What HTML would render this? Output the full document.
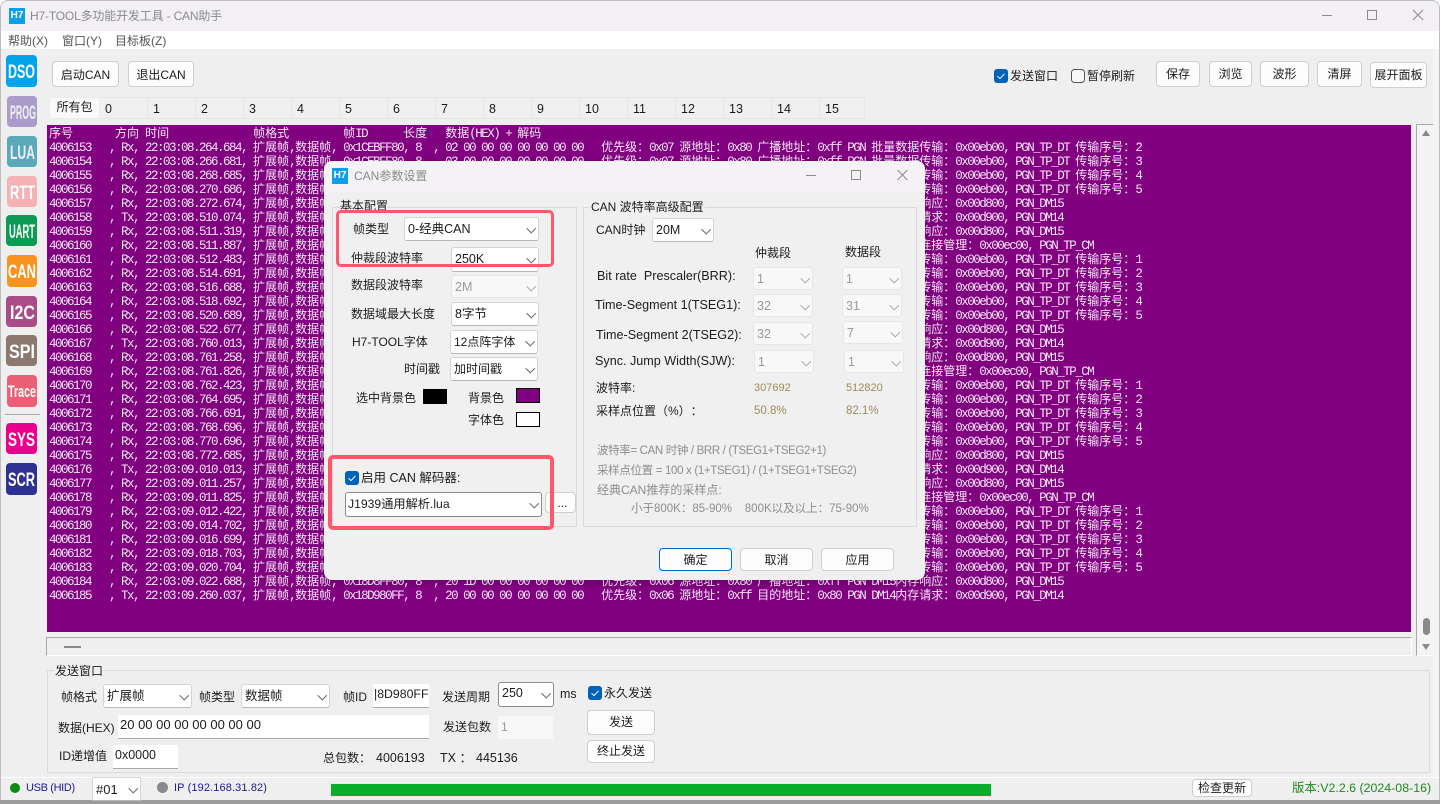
<!DOCTYPE html>
<html><head><meta charset="utf-8"><title>H7-TOOL CAN</title>
<style>
html,body{margin:0;padding:0;width:1442px;height:804px;overflow:hidden;background:#fff}
body{position:relative;font:12px/16px "Liberation Sans","Noto Sans CJK SC",sans-serif;color:#1c1c1c}
div,span,svg{position:absolute;box-sizing:border-box}
.t{white-space:pre;height:16px}
.g{color:#8e8e8e}
.o{color:#9b8c5c}
.n{color:#1d1d8c}
.btn{background:#fdfdfd;border:1px solid #cfcfcf;border-radius:4px;text-align:center;white-space:pre;color:#1c1c1c}
.c{background:#fff;border:1px solid #d4d4d4;border-bottom-color:#b8b8b8;border-radius:3px;padding-left:3px;white-space:pre;line-height:22px;font-size:12.5px}
.c:after{content:"";position:absolute;right:4px;top:7px;width:5.5px;height:5.5px;border-right:1px solid #666;border-bottom:1px solid #666;transform:rotate(45deg)}
.d{background:#f8f8f8;color:#9a9a9a;border-color:#e6e6e6}
.d:after{border-color:#aaa}
.f{border-color:#8c8c8c}
.in{background:#fff;border-bottom:1px solid #a8a8a8;white-space:pre;padding-left:2px;line-height:20px}
.grp{border:1px solid #dadada}
.tab{top:97px;width:48px;height:22px;background:#f0f0f0;border:1px solid #e6e6e6;border-left:0;padding-left:5px;line-height:22px;font-size:12.5px}
.red{border:3.5px solid #ff586c;border-radius:5px}
#log{left:47px;top:125px;width:1364px;height:507px;background:#800080;overflow:hidden;padding:1px 0 0 2px;color:#f6e6f6;font:12.5px/14px "Liberation Mono","Noto Sans CJK SC",monospace;letter-spacing:-1.5px}
#log p{margin:0;height:14px;white-space:pre;line-height:14px}
#log b{font:normal 12px/14px "Noto Sans CJK SC",sans-serif;letter-spacing:0}
</style></head><body>

<!-- window -->
<div style="left:0;top:0;width:1440px;height:800px;background:#efefef;border:1px solid #bdbdbd;border-bottom:0;border-radius:8px 8px 0 0;overflow:hidden"></div>
<div style="left:0;top:800px;width:1440px;height:4px;background:#9c9c9c"></div>
<div style="left:1px;top:1px;width:1438px;height:30px;background:#f3f0f5;border-radius:7px 7px 0 0"></div>
<div style="left:1px;top:31px;width:1438px;height:18px;background:#fff"></div>
<div style="left:1433px;top:49px;width:6px;height:728px;background:#f4f4f4"></div>

<!-- title -->
<div style="left:9px;top:8px;width:16px;height:16px;background:#0a9fe6;color:#fff;font:bold 10px/16px 'Liberation Sans';text-align:center">H7</div>
<div class="t" style="left:30px;top:8px;color:#8a8a8a;letter-spacing:-.17px">H7-TOOL多功能开发工具 - CAN助手</div>
<svg style="left:1320px;top:8px" width="110" height="14" fill="none" stroke="#8a8a8a"><path d="M2 7.5H12M47.5 2.5H56.5V11.5H47.5ZM93 2L103 12M103 2L93 12"/></svg>

<!-- menu -->
<div class="t" style="left:8px;top:33px;color:#555">帮助(X)</div>
<div class="t" style="left:62px;top:33px;color:#555">窗口(Y)</div>
<div class="t" style="left:115px;top:33px;color:#555">目标板(Z)</div>

<!-- sidebar -->
<svg style="left:0;top:50px" width="46" height="450" font-family="Liberation Sans" font-weight="bold" fill="#fff" font-size="19">
<rect x="6" y="5" width="31" height="32" rx="4" fill="#00a4ea"/><text x="8" y="28" textLength="27" lengthAdjust="spacingAndGlyphs">DSO</text>
<rect x="7" y="46" width="30" height="31" rx="4" fill="#a99ccb"/><text x="10" y="69" textLength="26" lengthAdjust="spacingAndGlyphs" fill="#eee">PROG</text>
<rect x="7" y="86" width="30" height="31" rx="4" fill="#5ba8b8"/><text x="10" y="109" textLength="25" lengthAdjust="spacingAndGlyphs" fill="#eef">LUA</text>
<rect x="7" y="126" width="30" height="31" rx="4" fill="#f4b2b4"/><text x="10" y="149" textLength="25" lengthAdjust="spacingAndGlyphs">RTT</text>
<rect x="6" y="165" width="31" height="31" rx="4" fill="#0b9b55"/><text x="9" y="188" textLength="26" lengthAdjust="spacingAndGlyphs">UART</text>
<rect x="7" y="205" width="30" height="32" rx="4" fill="#f7931e"/><text x="8" y="228" textLength="28" lengthAdjust="spacingAndGlyphs">CAN</text>
<rect x="6" y="246" width="31" height="31" rx="4" fill="#a94c87"/><text x="10" y="269" textLength="25" lengthAdjust="spacingAndGlyphs">I2C</text>
<rect x="6" y="285" width="31" height="31" rx="4" fill="#8b786e"/><text x="9" y="308" textLength="26" lengthAdjust="spacingAndGlyphs">SPI</text>
<rect x="7" y="325" width="30" height="32" rx="4" fill="#ec5f74"/><text x="8" y="347" font-size="17" textLength="28" lengthAdjust="spacingAndGlyphs">Trace</text>
<rect x="5" y="364" width="35" height="1" fill="#a8a8a8" />
<rect x="6" y="373" width="31" height="31" rx="4" fill="#e9008b"/><text x="8" y="396" textLength="27" lengthAdjust="spacingAndGlyphs">SYS</text>
<rect x="6" y="413" width="31" height="32" rx="4" fill="#2e3192"/><text x="8" y="436" textLength="27" lengthAdjust="spacingAndGlyphs">SCR</text>
</svg>

<!-- toolbar -->
<div class="btn" style="left:52px;top:61px;width:67px;height:26px;line-height:26px">启动CAN</div>
<div class="btn" style="left:128px;top:61px;width:66px;height:26px;line-height:26px">退出CAN</div>
<svg style="left:994px;top:69px" width="14" height="14"><rect width="14" height="14" rx="3" fill="#0063b8"/><path d="M3.5 7.2L6 9.6L10.5 4.8" fill="none" stroke="#fff"/></svg>
<div class="t" style="left:1010px;top:68px">发送窗口</div>
<svg style="left:1071px;top:69px" width="14" height="14"><rect x=".5" y=".5" width="13" height="13" rx="3" fill="#f8f8f8" stroke="#555"/></svg>
<div class="t" style="left:1087px;top:68px">暂停刷新</div>
<div class="btn" style="left:1156px;top:61px;width:44px;height:26px;line-height:25px">保存</div>
<div class="btn" style="left:1209px;top:61px;width:43px;height:26px;line-height:25px">浏览</div>
<div class="btn" style="left:1260px;top:61px;width:49px;height:26px;line-height:25px">波形</div>
<div class="btn" style="left:1317px;top:61px;width:45px;height:26px;line-height:24px">清屏</div>
<div class="btn" style="left:1370px;top:62px;width:57px;height:26px;line-height:25px">展开面板</div>

<!-- tabs -->
<div style="left:49px;top:97px;width:51px;height:22px;background:#f9f9f9;border:1px solid #ececec;text-align:center;line-height:18px">所有包</div>
<div class="tab" style="left:100px">0</div><div class="tab" style="left:148px">1</div><div class="tab" style="left:196px">2</div><div class="tab" style="left:244px">3</div>
<div class="tab" style="left:292px">4</div><div class="tab" style="left:340px">5</div><div class="tab" style="left:388px">6</div><div class="tab" style="left:436px">7</div>
<div class="tab" style="left:484px">8</div><div class="tab" style="left:532px">9</div><div class="tab" style="left:580px">10</div><div class="tab" style="left:628px">11</div>
<div class="tab" style="left:676px">12</div><div class="tab" style="left:724px">13</div><div class="tab" style="left:772px">14</div><div class="tab" style="left:820px;width:45px">15</div>

<!-- log -->
<div id="log">
<p><b>序号</b>       <b>方向</b> <b>时间</b>              <b>帧格式</b>         <b>帧</b>ID      <b>长度</b>   <b>数据</b>(HEX) + <b>解码</b></p>
<p>4006153   , Rx, 22:03:08.264.684, <b>扩展帧</b>,<b>数据帧</b>, 0x1CEBFF80, 8  , 02 00 00 00 00 00 00 00   <b>优先级：</b>0x07 <b>源地址：</b>0x80 <b>广播地址：</b>0xff PGN <b>批量数据传输：</b>0x00eb00, PGN_TP_DT <b>传输序号：</b>2</p>
<p>4006154   , Rx, 22:03:08.266.681, <b>扩展帧</b>,<b>数据帧</b>, 0x1CEBFF80, 8  , 03 00 00 00 00 00 00 00   <b>优先级：</b>0x07 <b>源地址：</b>0x80 <b>广播地址：</b>0xff PGN <b>批量数据传输：</b>0x00eb00, PGN_TP_DT <b>传输序号：</b>3</p>
<p>4006155   , Rx, 22:03:08.268.685, <b>扩展帧</b>,<b>数据帧</b>, 0x1CEBFF80, 8  , 04 00 00 00 00 00 00 00   <b>优先级：</b>0x07 <b>源地址：</b>0x80 <b>广播地址：</b>0xff PGN <b>批量数据传输：</b>0x00eb00, PGN_TP_DT <b>传输序号：</b>4</p>
<p>4006156   , Rx, 22:03:08.270.686, <b>扩展帧</b>,<b>数据帧</b>, 0x1CEBFF80, 8  , 05 00 00 00 00 00 00 00   <b>优先级：</b>0x07 <b>源地址：</b>0x80 <b>广播地址：</b>0xff PGN <b>批量数据传输：</b>0x00eb00, PGN_TP_DT <b>传输序号：</b>5</p>
<p>4006157   , Rx, 22:03:08.272.674, <b>扩展帧</b>,<b>数据帧</b>, 0x18D8FF80, 8  , 20 1D 00 00 00 00 00 00   <b>优先级：</b>0x06 <b>源地址：</b>0x80 <b>广播地址：</b>0xff PGN DM15<b>内存响应：</b>0x00d800, PGN_DM15</p>
<p>4006158   , Tx, 22:03:08.510.074, <b>扩展帧</b>,<b>数据帧</b>, 0x18D980FF, 8  , 20 00 00 00 00 00 00 00   <b>优先级：</b>0x06 <b>源地址：</b>0xff <b>目的地址：</b>0x80 PGN DM14<b>内存请求：</b>0x00d900, PGN_DM14</p>
<p>4006159   , Rx, 22:03:08.511.319, <b>扩展帧</b>,<b>数据帧</b>, 0x18D8FF80, 8  , 20 1D 00 00 00 00 00 00   <b>优先级：</b>0x06 <b>源地址：</b>0x80 <b>广播地址：</b>0xff PGN DM15<b>内存响应：</b>0x00d800, PGN_DM15</p>
<p>4006160   , Rx, 22:03:08.511.887, <b>扩展帧</b>,<b>数据帧</b>, 0x1CECFF80, 8  , 20 00 00 00 00 00 00 00   <b>优先级：</b>0x07 <b>源地址：</b>0x80 <b>广播地址：</b>0xff PGN <b>传输协议连接管理：</b>0x00ec00, PGN_TP_CM</p>
<p>4006161   , Rx, 22:03:08.512.483, <b>扩展帧</b>,<b>数据帧</b>, 0x1CEBFF80, 8  , 01 00 00 00 00 00 00 00   <b>优先级：</b>0x07 <b>源地址：</b>0x80 <b>广播地址：</b>0xff PGN <b>批量数据传输：</b>0x00eb00, PGN_TP_DT <b>传输序号：</b>1</p>
<p>4006162   , Rx, 22:03:08.514.691, <b>扩展帧</b>,<b>数据帧</b>, 0x1CEBFF80, 8  , 02 00 00 00 00 00 00 00   <b>优先级：</b>0x07 <b>源地址：</b>0x80 <b>广播地址：</b>0xff PGN <b>批量数据传输：</b>0x00eb00, PGN_TP_DT <b>传输序号：</b>2</p>
<p>4006163   , Rx, 22:03:08.516.688, <b>扩展帧</b>,<b>数据帧</b>, 0x1CEBFF80, 8  , 03 00 00 00 00 00 00 00   <b>优先级：</b>0x07 <b>源地址：</b>0x80 <b>广播地址：</b>0xff PGN <b>批量数据传输：</b>0x00eb00, PGN_TP_DT <b>传输序号：</b>3</p>
<p>4006164   , Rx, 22:03:08.518.692, <b>扩展帧</b>,<b>数据帧</b>, 0x1CEBFF80, 8  , 04 00 00 00 00 00 00 00   <b>优先级：</b>0x07 <b>源地址：</b>0x80 <b>广播地址：</b>0xff PGN <b>批量数据传输：</b>0x00eb00, PGN_TP_DT <b>传输序号：</b>4</p>
<p>4006165   , Rx, 22:03:08.520.689, <b>扩展帧</b>,<b>数据帧</b>, 0x1CEBFF80, 8  , 05 00 00 00 00 00 00 00   <b>优先级：</b>0x07 <b>源地址：</b>0x80 <b>广播地址：</b>0xff PGN <b>批量数据传输：</b>0x00eb00, PGN_TP_DT <b>传输序号：</b>5</p>
<p>4006166   , Rx, 22:03:08.522.677, <b>扩展帧</b>,<b>数据帧</b>, 0x18D8FF80, 8  , 20 1D 00 00 00 00 00 00   <b>优先级：</b>0x06 <b>源地址：</b>0x80 <b>广播地址：</b>0xff PGN DM15<b>内存响应：</b>0x00d800, PGN_DM15</p>
<p>4006167   , Tx, 22:03:08.760.013, <b>扩展帧</b>,<b>数据帧</b>, 0x18D980FF, 8  , 20 00 00 00 00 00 00 00   <b>优先级：</b>0x06 <b>源地址：</b>0xff <b>目的地址：</b>0x80 PGN DM14<b>内存请求：</b>0x00d900, PGN_DM14</p>
<p>4006168   , Rx, 22:03:08.761.258, <b>扩展帧</b>,<b>数据帧</b>, 0x18D8FF80, 8  , 20 1D 00 00 00 00 00 00   <b>优先级：</b>0x06 <b>源地址：</b>0x80 <b>广播地址：</b>0xff PGN DM15<b>内存响应：</b>0x00d800, PGN_DM15</p>
<p>4006169   , Rx, 22:03:08.761.826, <b>扩展帧</b>,<b>数据帧</b>, 0x1CECFF80, 8  , 20 00 00 00 00 00 00 00   <b>优先级：</b>0x07 <b>源地址：</b>0x80 <b>广播地址：</b>0xff PGN <b>传输协议连接管理：</b>0x00ec00, PGN_TP_CM</p>
<p>4006170   , Rx, 22:03:08.762.423, <b>扩展帧</b>,<b>数据帧</b>, 0x1CEBFF80, 8  , 01 00 00 00 00 00 00 00   <b>优先级：</b>0x07 <b>源地址：</b>0x80 <b>广播地址：</b>0xff PGN <b>批量数据传输：</b>0x00eb00, PGN_TP_DT <b>传输序号：</b>1</p>
<p>4006171   , Rx, 22:03:08.764.695, <b>扩展帧</b>,<b>数据帧</b>, 0x1CEBFF80, 8  , 02 00 00 00 00 00 00 00   <b>优先级：</b>0x07 <b>源地址：</b>0x80 <b>广播地址：</b>0xff PGN <b>批量数据传输：</b>0x00eb00, PGN_TP_DT <b>传输序号：</b>2</p>
<p>4006172   , Rx, 22:03:08.766.691, <b>扩展帧</b>,<b>数据帧</b>, 0x1CEBFF80, 8  , 03 00 00 00 00 00 00 00   <b>优先级：</b>0x07 <b>源地址：</b>0x80 <b>广播地址：</b>0xff PGN <b>批量数据传输：</b>0x00eb00, PGN_TP_DT <b>传输序号：</b>3</p>
<p>4006173   , Rx, 22:03:08.768.696, <b>扩展帧</b>,<b>数据帧</b>, 0x1CEBFF80, 8  , 04 00 00 00 00 00 00 00   <b>优先级：</b>0x07 <b>源地址：</b>0x80 <b>广播地址：</b>0xff PGN <b>批量数据传输：</b>0x00eb00, PGN_TP_DT <b>传输序号：</b>4</p>
<p>4006174   , Rx, 22:03:08.770.696, <b>扩展帧</b>,<b>数据帧</b>, 0x1CEBFF80, 8  , 05 00 00 00 00 00 00 00   <b>优先级：</b>0x07 <b>源地址：</b>0x80 <b>广播地址：</b>0xff PGN <b>批量数据传输：</b>0x00eb00, PGN_TP_DT <b>传输序号：</b>5</p>
<p>4006175   , Rx, 22:03:08.772.685, <b>扩展帧</b>,<b>数据帧</b>, 0x18D8FF80, 8  , 20 1D 00 00 00 00 00 00   <b>优先级：</b>0x06 <b>源地址：</b>0x80 <b>广播地址：</b>0xff PGN DM15<b>内存响应：</b>0x00d800, PGN_DM15</p>
<p>4006176   , Tx, 22:03:09.010.013, <b>扩展帧</b>,<b>数据帧</b>, 0x18D980FF, 8  , 20 00 00 00 00 00 00 00   <b>优先级：</b>0x06 <b>源地址：</b>0xff <b>目的地址：</b>0x80 PGN DM14<b>内存请求：</b>0x00d900, PGN_DM14</p>
<p>4006177   , Rx, 22:03:09.011.257, <b>扩展帧</b>,<b>数据帧</b>, 0x18D8FF80, 8  , 20 1D 00 00 00 00 00 00   <b>优先级：</b>0x06 <b>源地址：</b>0x80 <b>广播地址：</b>0xff PGN DM15<b>内存响应：</b>0x00d800, PGN_DM15</p>
<p>4006178   , Rx, 22:03:09.011.825, <b>扩展帧</b>,<b>数据帧</b>, 0x1CECFF80, 8  , 20 00 00 00 00 00 00 00   <b>优先级：</b>0x07 <b>源地址：</b>0x80 <b>广播地址：</b>0xff PGN <b>传输协议连接管理：</b>0x00ec00, PGN_TP_CM</p>
<p>4006179   , Rx, 22:03:09.012.422, <b>扩展帧</b>,<b>数据帧</b>, 0x1CEBFF80, 8  , 01 00 00 00 00 00 00 00   <b>优先级：</b>0x07 <b>源地址：</b>0x80 <b>广播地址：</b>0xff PGN <b>批量数据传输：</b>0x00eb00, PGN_TP_DT <b>传输序号：</b>1</p>
<p>4006180   , Rx, 22:03:09.014.702, <b>扩展帧</b>,<b>数据帧</b>, 0x1CEBFF80, 8  , 02 00 00 00 00 00 00 00   <b>优先级：</b>0x07 <b>源地址：</b>0x80 <b>广播地址：</b>0xff PGN <b>批量数据传输：</b>0x00eb00, PGN_TP_DT <b>传输序号：</b>2</p>
<p>4006181   , Rx, 22:03:09.016.699, <b>扩展帧</b>,<b>数据帧</b>, 0x1CEBFF80, 8  , 03 00 00 00 00 00 00 00   <b>优先级：</b>0x07 <b>源地址：</b>0x80 <b>广播地址：</b>0xff PGN <b>批量数据传输：</b>0x00eb00, PGN_TP_DT <b>传输序号：</b>3</p>
<p>4006182   , Rx, 22:03:09.018.703, <b>扩展帧</b>,<b>数据帧</b>, 0x1CEBFF80, 8  , 04 00 00 00 00 00 00 00   <b>优先级：</b>0x07 <b>源地址：</b>0x80 <b>广播地址：</b>0xff PGN <b>批量数据传输：</b>0x00eb00, PGN_TP_DT <b>传输序号：</b>4</p>
<p>4006183   , Rx, 22:03:09.020.704, <b>扩展帧</b>,<b>数据帧</b>, 0x1CEBFF80, 8  , 05 00 00 00 00 00 00 00   <b>优先级：</b>0x07 <b>源地址：</b>0x80 <b>广播地址：</b>0xff PGN <b>批量数据传输：</b>0x00eb00, PGN_TP_DT <b>传输序号：</b>5</p>
<p>4006184   , Rx, 22:03:09.022.688, <b>扩展帧</b>,<b>数据帧</b>, 0x18D8FF80, 8  , 20 1D 00 00 00 00 00 00   <b>优先级：</b>0x06 <b>源地址：</b>0x80 <b>广播地址：</b>0xff PGN DM15<b>内存响应：</b>0x00d800, PGN_DM15</p>
<p>4006185   , Tx, 22:03:09.260.037, <b>扩展帧</b>,<b>数据帧</b>, 0x18D980FF, 8  , 20 00 00 00 00 00 00 00   <b>优先级：</b>0x06 <b>源地址：</b>0xff <b>目的地址：</b>0x80 PGN DM14<b>内存请求：</b>0x00d900, PGN_DM14</p>
</div>

<!-- lower scroll strip + vertical scrollbar -->
<div style="left:46px;top:637px;width:1366px;height:19px;border-top:1px solid #a8a8a8;border-left:1px solid #a8a8a8;border-right:1px solid #fff;border-bottom:1px solid #fff"></div>
<div style="left:64px;top:646px;width:17px;height:2px;background:#8a8a8a"></div>
<div style="left:1416px;top:124px;width:17px;height:532px;background:#f4f4f4;border-top:1px solid #a8a8a8;border-left:1px solid #a8a8a8;border-bottom:1px solid #fff"></div>
<svg style="left:1420px;top:128px" width="14" height="10"><path d="M6 2L10 8H2Z" fill="#8a8a8a"/></svg>
<div style="left:1423px;top:618px;width:7px;height:17px;background:#8a8a8a;border-radius:3.5px"></div>
<svg style="left:1420px;top:642px" width="14" height="10"><path d="M2 2H10L6 8Z" fill="#8a8a8a"/></svg>

<!-- send group -->
<div class="grp" style="left:47px;top:670px;width:1383px;height:103px"></div>
<div class="t" style="left:54px;top:663px;background:#efefef;padding:0 1px">发送窗口</div>
<div class="t" style="left:61px;top:689px">帧格式</div>
<div class="c" style="left:103px;top:684px;width:89px;height:24px">扩展帧</div>
<div class="t" style="left:199px;top:689px">帧类型</div>
<div class="c" style="left:241px;top:684px;width:89px;height:24px">数据帧</div>
<div class="t" style="left:343px;top:689px">帧ID</div>
<div class="in" style="left:373px;top:684px;width:56px;height:24px;overflow:hidden;line-height:21px;padding-left:1px;font-size:12.3px"><span style="position:static">|8D980FF</span></div>
<div class="t" style="left:442px;top:689px">发送周期</div>
<div class="c f" style="left:498px;top:682px;width:56px;height:25px;line-height:20px">250</div>
<div class="t" style="left:560px;top:686px;font-size:12.5px">ms</div>
<svg style="left:588px;top:686px" width="14" height="14"><rect width="14" height="14" rx="3" fill="#0063b8"/><path d="M3.5 7.2L6 9.6L10.5 4.8" fill="none" stroke="#fff"/></svg>
<div class="t" style="left:604px;top:685px">永久发送</div>
<div class="t" style="left:58px;top:720px">数据(HEX)</div>
<div class="in" style="left:118px;top:715px;width:311px;height:24px;font-size:13px">20 00 00 00 00 00 00 00</div>
<div class="t" style="left:443px;top:719px">发送包数</div>
<div style="left:498px;top:716px;width:55px;height:23px;background:#f8f8f8;color:#9a9a9a;padding-left:3px;line-height:23px">1</div>
<div class="btn" style="left:587px;top:710px;width:68px;height:25px;line-height:23px">发送</div>
<div class="btn" style="left:587px;top:740px;width:68px;height:23px;line-height:21px">终止发送</div>
<div class="t" style="left:59px;top:748px">ID递增值</div>
<div class="in" style="left:113px;top:745px;width:65px;height:24px;line-height:21px;font-size:12.5px">0x0000</div>
<div class="t" style="left:323px;top:750px;text-spacing-trim:space-all">总包数：</div>
<div class="t" style="left:376px;top:750px;font-size:12.5px">4006193</div>
<div class="t" style="left:440px;top:750px;font-size:12.5px;text-spacing-trim:space-all">TX ：</div>
<div class="t" style="left:476px;top:750px;font-size:12.5px">445136</div>

<!-- status bar -->
<div style="left:1px;top:777px;width:1438px;height:1px;background:#fff"></div>
<div style="left:10px;top:783px;width:10px;height:10px;border-radius:50%;background:#0a8a0f"></div>
<div class="t n" style="left:26px;top:780px;font-size:11px;letter-spacing:-.35px">USB (HID)</div>
<div class="c" style="left:92px;top:777px;width:49px;height:24px;border-radius:0;line-height:23px;font-size:13px">#01</div>
<div style="left:157px;top:782px;width:11px;height:11px;border-radius:50%;background:#8a8a8a"></div>
<div class="t n" style="left:174px;top:780px;font-size:11px;letter-spacing:.12px">IP (192.168.31.82)</div>
<div style="left:330px;top:783px;width:662px;height:14px;background:#0aad29;border:1px solid #e8e8e8"></div>
<div class="btn" style="left:1192px;top:779px;width:60px;height:18px;line-height:16px;background:#fff">检查更新</div>
<div class="t" style="left:1292px;top:780px;color:#1f8a1f;font-size:12.4px">版本:V2.2.6 (2024-08-16)</div>

<!-- dialog -->
<div style="left:324px;top:161px;width:601px;height:419px;background:#f0f0f0;border-radius:8px;overflow:hidden;box-shadow:0 2px 8px rgba(0,0,0,.2)">
  <div style="left:0;top:0;width:601px;height:30px;background:#f4f2f5"></div>
</div>
<div style="left:332px;top:168px;width:16px;height:16px;background:#0a9fe6;color:#fff;font:bold 10px/16px 'Liberation Sans';text-align:center">H7</div>
<div class="t" style="left:354px;top:168px;color:#8a8a8a">CAN参数设置</div>
<svg style="left:804px;top:168px" width="110" height="14" fill="none" stroke="#8a8a8a"><path d="M2 7.5H12M47.5 2.5H56.5V11.5H47.5ZM93.5 2L103.5 12M103.5 2L93.5 12"/></svg>

<div class="grp" style="left:332px;top:207px;width:245px;height:320px"></div>
<div class="t" style="left:340px;top:198px;background:#f0f0f0">基本配置</div>
<div class="grp" style="left:583px;top:207px;width:334px;height:320px"></div>
<div class="t" style="left:590px;top:199px;background:#f0f0f0;padding:0 1px">CAN 波特率高级配置</div>

<div class="t" style="left:353px;top:221px">帧类型</div>
<div class="c" style="left:404px;top:217px;width:135px;height:24px">0-经典CAN</div>
<div class="t" style="left:351px;top:250px">仲裁段波特率</div>
<div class="c" style="left:451px;top:247px;width:88px;height:25px">250K</div>
<div class="t" style="left:351px;top:277px">数据段波特率</div>
<div class="c d" style="left:451px;top:275px;width:88px;height:23px">2M</div>
<div class="t" style="left:351px;top:306px">数据域最大长度</div>
<div class="c" style="left:451px;top:302px;width:88px;height:24px">8字节</div>
<div class="t" style="left:352px;top:334px">H7-TOOL字体</div>
<div class="c" style="left:450px;top:330px;width:88px;height:24px;font-size:12px">12点阵字体</div>
<div class="t" style="left:404px;top:361px">时间戳</div>
<div class="c" style="left:450px;top:357px;width:88px;height:24px;font-size:12px">加时间戳</div>
<div class="t" style="left:356px;top:390px">选中背景色</div>
<div style="left:423px;top:389px;width:24px;height:15px;background:#000"></div>
<div class="t" style="left:468px;top:390px">背景色</div>
<div style="left:516px;top:388px;width:24px;height:15px;background:#800080;border:1px solid #000"></div>
<div class="t" style="left:468px;top:412px">字体色</div>
<div style="left:516px;top:412px;width:24px;height:15px;background:#fff;border:1px solid #000"></div>

<svg style="left:345px;top:471px" width="14" height="14"><rect width="14" height="14" rx="3" fill="#0063b8"/><path d="M3.5 7.2L6 9.6L10.5 4.8" fill="none" stroke="#fff"/></svg>
<div class="t" style="left:361px;top:470px;font-size:12.5px">启用 CAN 解码器:</div>
<div class="c f" style="left:345px;top:492px;width:197px;height:25px;padding-left:2px;font-size:12.2px">J1939通用解析.lua</div>
<div class="btn" style="left:545px;top:492px;width:31px;height:21px;line-height:21px;padding-left:4px">...</div>

<div class="red" style="left:336px;top:210px;width:218px;height:57px"></div>
<div class="red" style="left:328px;top:455px;width:226px;height:75px;border-width:4px"></div>

<div class="t" style="left:596px;top:222px">CAN时钟</div>
<div class="c" style="left:652px;top:218px;width:62px;height:24px">20M</div>
<div class="t" style="left:755px;top:245px">仲裁段</div>
<div class="t" style="left:845px;top:244px">数据段</div>
<div class="t" style="left:597px;top:268px;font-size:12.6px">Bit rate  Prescaler(BRR):</div>
<div class="c d" style="left:753px;top:267px;width:60px;height:23px">1</div>
<div class="c d" style="left:842px;top:267px;width:60px;height:23px">1</div>
<div class="t" style="left:595px;top:297px;font-size:12.6px">Time-Segment 1(TSEG1):</div>
<div class="c d" style="left:753px;top:294px;width:60px;height:23px">32</div>
<div class="c d" style="left:842px;top:294px;width:60px;height:23px">31</div>
<div class="t" style="left:596px;top:327px;font-size:12.6px">Time-Segment 2(TSEG2):</div>
<div class="c d" style="left:753px;top:322px;width:60px;height:23px">32</div>
<div class="c d" style="left:843px;top:321px;width:60px;height:23px">7</div>
<div class="t" style="left:595px;top:353px;font-size:12.6px">Sync. Jump Width(SJW):</div>
<div class="c d" style="left:754px;top:350px;width:60px;height:23px">1</div>
<div class="c d" style="left:844px;top:350px;width:60px;height:23px">1</div>
<div class="t" style="left:596px;top:380px">波特率:</div>
<div class="t o" style="left:754px;top:380px;font-size:11px">307692</div>
<div class="t o" style="left:846px;top:380px;font-size:11px">512820</div>
<div class="t" style="left:596px;top:403px;text-spacing-trim:space-all">采样点位置（%）：</div>
<div class="t o" style="left:754px;top:403px;font-size:11.5px">50.8%</div>
<div class="t o" style="left:846px;top:403px;font-size:11.5px">82.1%</div>
<div class="t g" style="left:597px;top:443px;font-size:11.5px;letter-spacing:-.35px">波特率= CAN 时钟 / BRR / (TSEG1+TSEG2+1)</div>
<div class="t g" style="left:597px;top:463px;font-size:11.5px;letter-spacing:-.33px">采样点位置 = 100 x (1+TSEG1) / (1+TSEG1+TSEG2)</div>
<div class="t g" style="left:597px;top:482px">经典CAN推荐的采样点:</div>
<div class="t g" style="left:631px;top:501px;font-size:11.5px">小于800K：85-90%    800K以及以上：75-90%</div>

<div class="btn" style="left:659px;top:548px;width:73px;height:23px;line-height:22px;border-color:#0067c0">确定</div>
<div class="btn" style="left:740px;top:548px;width:73px;height:23px;line-height:22px">取消</div>
<div class="btn" style="left:821px;top:548px;width:73px;height:23px;line-height:22px">应用</div>
</body></html>
